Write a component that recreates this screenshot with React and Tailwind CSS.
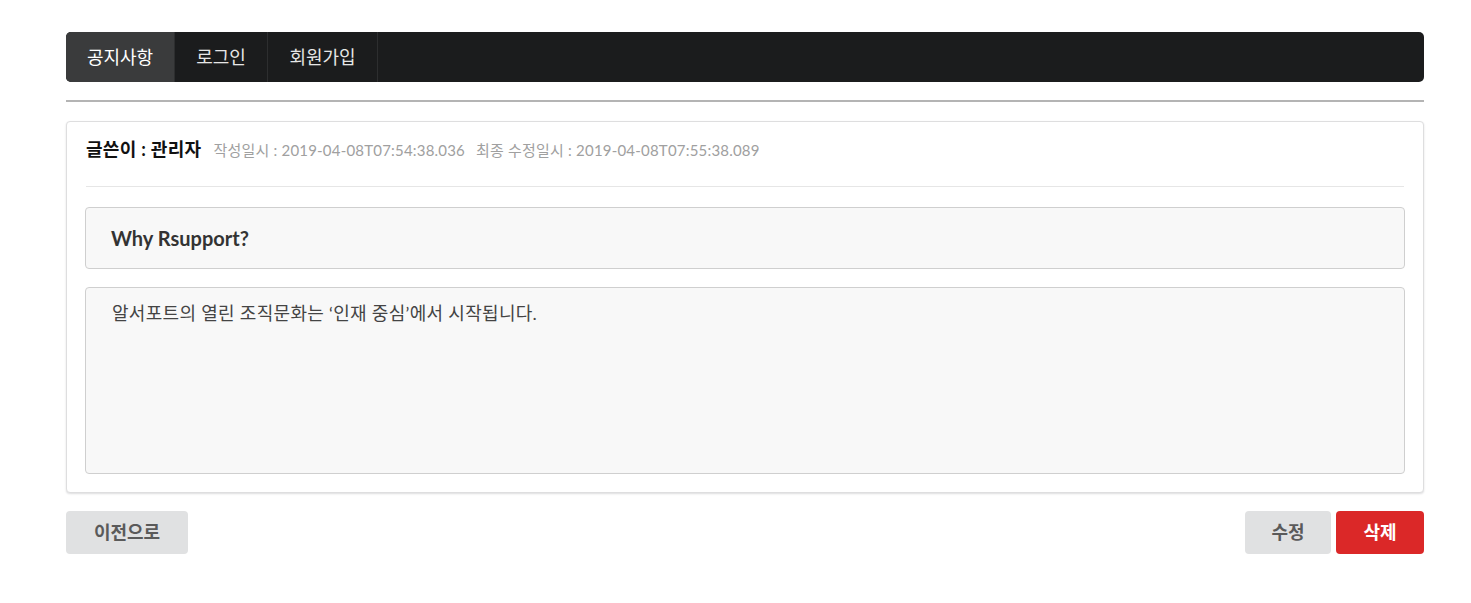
export default function App() {
  const font = { fontFamily: "Lato, 'Noto Sans CJK KR', 'Noto Sans', sans-serif" };
  return (
    <div className="min-h-screen bg-white" style={font}>
      <div className="ml-[66px] w-[1358px] pt-8">
        <div className="flex h-[50px] rounded-[5px] bg-[#1b1c1d] overflow-hidden">
          <a className="flex items-center w-[109px] justify-center bg-[#3a3b3c] text-[18px] text-white border-r border-[#2d2e2f]">
            공지사항
          </a>
          <a className="flex items-center w-[93px] justify-center text-[18px] text-[#e6e6e6] border-r border-[#2d2e2f]">
            로그인
          </a>
          <a className="flex items-center w-[110px] justify-center text-[18px] text-[#e6e6e6] border-r border-[#2d2e2f]">
            회원가입
          </a>
        </div>

        <div className="mt-[18px] h-[2px] bg-[#b4b4b4]" />

        <div className="mt-[19px] rounded-[4px] border border-[#dededf] bg-white shadow-[0_1px_2px_rgba(34,36,38,0.15)] px-[18px] pb-[18px]">
          <div className="flex items-baseline h-[64px] pt-[14px] pl-px">
            <span className="text-[18px] font-bold text-[#111] tracking-[0.3px]">글쓴이 : 관리자</span>
            <span className="ml-[12px] text-[15px] text-[#a0a0a0] tracking-[0.2px]">작성일시 : 2019-04-08T07:54:38.036</span>
            <span className="ml-[11px] text-[15px] text-[#a0a0a0] tracking-[0.2px]">최종 수정일시 : 2019-04-08T07:55:38.089</span>
          </div>
          <div className="h-px bg-[#e6e6e6] mx-px" />
          <div className="mt-[20px] h-[62px] flex items-center rounded-[4px] border border-[#cfcfcf] bg-[#f8f8f8] px-[25px]">
            <span className="text-[20px] font-bold text-[#333]">Why Rsupport?</span>
          </div>
          <div className="mt-[18px] h-[187px] rounded-[4px] border border-[#cfcfcf] bg-[#f8f8f8] px-[26px] pt-[12px]">
            <p className="text-[18px] text-[#444] tracking-[0.3px]">알서포트의 열린 조직문화는 ‘인재 중심’에서 시작됩니다.</p>
          </div>
        </div>

        <div className="mt-[18px] flex items-center">
          <button className="h-[43px] w-[122px] rounded-[4px] bg-[#e0e1e2] text-[18px] font-bold text-[#5a5a5a]">
            이전으로
          </button>
          <div className="ml-auto flex gap-[5px]">
            <button className="h-[43px] w-[86px] rounded-[4px] bg-[#e0e1e2] text-[18px] font-bold text-[#5a5a5a]">
              수정
            </button>
            <button className="h-[43px] w-[88px] rounded-[4px] bg-[#db2828] text-[18px] font-bold text-white">
              삭제
            </button>
          </div>
        </div>
      </div>
    </div>
  );
}
